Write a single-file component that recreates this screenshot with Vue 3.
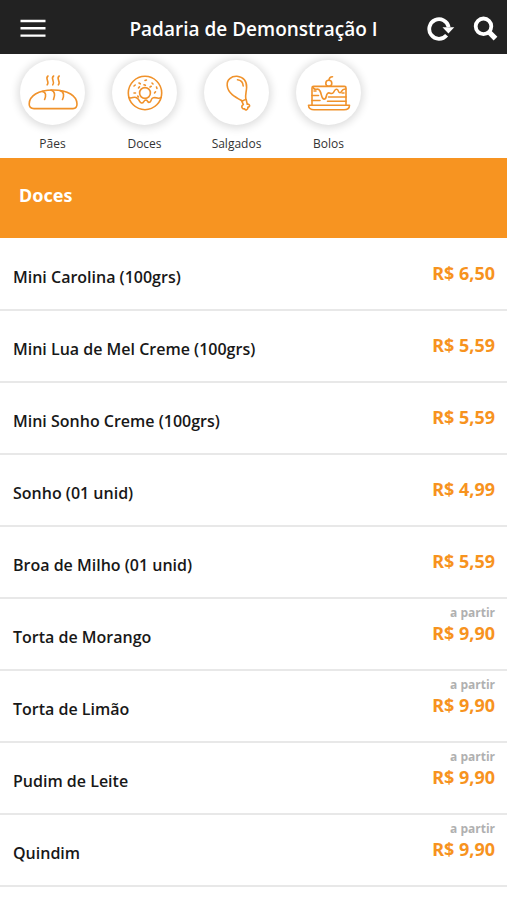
<script setup>
const categories = [
  { id: 'paes', name: 'Pães' },
  { id: 'doces', name: 'Doces' },
  { id: 'salgados', name: 'Salgados' },
  { id: 'bolos', name: 'Bolos' },
]

const products = [
  { name: 'Mini Carolina (100grs)', price: 'R$ 6,50' },
  { name: 'Mini Lua de Mel Creme (100grs)', price: 'R$ 5,59' },
  { name: 'Mini Sonho Creme (100grs)', price: 'R$ 5,59' },
  { name: 'Sonho (01 unid)', price: 'R$ 4,99' },
  { name: 'Broa de Milho (01 unid)', price: 'R$ 5,59' },
  { name: 'Torta de Morango', price: 'R$ 9,90', from: true },
  { name: 'Torta de Limão', price: 'R$ 9,90', from: true },
  { name: 'Pudim de Leite', price: 'R$ 9,90', from: true },
  { name: 'Quindim', price: 'R$ 9,90', from: true },
]
</script>

<template>
  <div class="page">
    <header class="topbar">
      <button class="icon-button" type="button" aria-label="Menu">
        <svg width="26" height="26" viewBox="0 0 26 26" stroke="#fff" stroke-width="2.4">
          <path d="M0.5 5H25.5M0.5 12.3H25.5M0.5 19.6H25.5" />
        </svg>
      </button>
      <h1 class="title">Padaria de Demonstração I</h1>
      <div class="actions">
        <button class="icon-button" type="button" aria-label="Atualizar">
          <svg width="28" height="26" viewBox="0 0 28 26" fill="none">
            <path d="M19.6 19.3A9.8 9.8 0 1 1 21.7 11.2" stroke="#fff" stroke-width="3.8" />
            <path d="M15.5 11.2H27.3L21.4 17.6Z" fill="#fff" />
          </svg>
        </button>
        <button class="icon-button" type="button" aria-label="Buscar">
          <svg width="26" height="26" viewBox="0 0 26 26" fill="none" stroke="#fff">
            <circle cx="10.5" cy="10.3" r="7.8" stroke-width="3.8" />
            <path d="M16 16L22.5 22.6" stroke-width="5.2" />
          </svg>
        </button>
      </div>
    </header>

    <nav class="categories" aria-label="Categorias">
      <a v-for="category in categories" :key="category.id" class="category" :href="'#' + category.id">
        <span class="disc">
          <svg v-if="category.id === 'paes'" class="art" viewBox="0 0 50 50">
            <path d="M1.2 36C1.2 28 10 22 25 22S49 28 49 36C49 39.4 47.5 40.6 45 40.6H6C3 40.6 1.2 39.4 1.2 36Z" />
            <path d="M14.2 23.5C18.5 24 18 28 16.6 31.5M23 22C27.5 23.5 27 27.5 25.5 31.5M32 22.6C36.5 24 36 28 34.5 31.5" />
            <path d="M20 8C16.5 10.5 22 13.5 19.2 16.8M25.6 8C22 10.5 27.5 13.5 24.8 16.8M31.2 8C27.6 10.5 33.2 13.5 30.4 16.8" />
          </svg>
          <svg v-else-if="category.id === 'doces'" class="art" viewBox="0 0 50 50">
            <circle cx="25" cy="25" r="16.7" />
            <circle cx="25" cy="25" r="5.4" />
            <path d="M8.8 29.5C12.5 31.5 13.5 27.5 17 30C20 32 19.2 34.4 21.5 35C24 35.5 23.5 31.8 26 32C28.2 32.5 27.5 35.5 30 34C32 32.5 30.5 30.5 33.3 29.8C37.5 28.9 38 31.5 41.2 29.5" />
            <path d="M14 18l1.2-1M19 15l1.3.8M25 12.4l1.4-.4M32 15l1 1M36.5 19l.4 1.4M18.5 20l1-1.2M14 25h1.5M24 16.8l1.4.5M30 19l1.2-.7M34.5 25l1-1.2M18.5 29l-.8-1" />
          </svg>
          <svg v-else-if="category.id === 'salgados'" class="art" viewBox="0 0 50 50">
            <path d="M30.5 33C24 29.5 15.8 25.5 15.2 17.5C14.6 11.5 19.5 8 25 8.3C31.5 8.8 35 13.5 34.6 19.5C34.4 24 33 27 33.8 31.5Q32 32 30.5 33Z" />
            <path d="M25.5 11.8C29 12.2 31 14.6 31.2 18" />
            <path d="M29.5 32.6L31.4 36.6C28.6 38 30 41.4 32.6 40.8C33.2 42.9 36.4 41.8 35.8 39.4C38.7 38.9 37.8 35.5 35.2 36.2L34.2 31.6" />
          </svg>
          <svg v-else class="art" viewBox="0 0 50 50">
            <path d="M8 37V20Q8 18.4 9.6 18.4H40.4Q42 18.4 42 20V37" />
            <path d="M9 19.5C11.5 24 13.5 18.5 16 23C18 26.5 17 30.5 20 31.2C23 31 21.5 27.5 23.5 25.5C25.5 23.5 27 27 29.2 24.8C31 22.7 30.5 21 32.8 21.2C35 21.5 33.5 24.5 36 24.8C38 25 37 20.7 41.5 21" />
            <path d="M8 27.5H14.5M24.5 29H42M8 32.5H16M23.5 33.3H42M10 23h2M38 25h2" />
            <path d="M4.5 37.3H45.5C45.5 40.3 43 41.7 40 41.7H10C7 41.7 4.5 40.3 4.5 37.3Z" />
            <circle cx="24.8" cy="15.2" r="3" />
            <path d="M25 12.2C25.2 10 26.5 8.8 28.5 8.8" />
          </svg>
        </span>
        <span class="category-name">{{ category.name }}</span>
      </a>
    </nav>

    <main>
      <h2 class="section-title">Doces</h2>
      <ul class="products">
        <li v-for="product in products" :key="product.name" class="product">
          <span class="product-name">{{ product.name }}</span>
          <span class="price-block">
            <small v-if="product.from" class="from">a partir</small>
            <strong class="price">{{ product.price }}</strong>
          </span>
        </li>
      </ul>
    </main>
  </div>
</template>

<style>
body {
  margin: 0;
  background: #fff;
}
</style>

<style scoped>
.page {
  font-family: "Open Sans", "Noto Sans", sans-serif;
  color: #181818;
}

.topbar {
  display: grid;
  grid-template-columns: 60px 1fr 72px;
  align-items: center;
  height: 54px;
  padding: 3px 8px 0 20px;
  box-sizing: border-box;
  background: #222;
}

.icon-button {
  display: flex;
  padding: 0;
  border: 0;
  background: none;
  cursor: pointer;
}

.title {
  margin: 0;
  color: #fff;
  font-size: 19px;
  line-height: 28px;
  font-weight: 600;
  text-align: center;
  white-space: nowrap;
}

.actions {
  display: flex;
  justify-content: flex-end;
  gap: 18px;
}

.categories {
  display: flex;
  gap: 27px;
  height: 104px;
  padding: 6px 20px 0;
  box-sizing: border-box;
}

.category {
  display: flex;
  flex-direction: column;
  align-items: center;
  gap: 9px;
  width: 65px;
  color: #333;
  text-decoration: none;
}

.disc {
  display: flex;
  align-items: center;
  justify-content: center;
  width: 65px;
  height: 65px;
  border-radius: 50%;
  background: #fff;
  box-shadow: 0 1px 8px 2px rgba(0, 0, 0, 0.14);
}

.art {
  width: 50px;
  height: 50px;
  fill: none;
  stroke: #f0922b;
  stroke-width: 1.6;
  stroke-linecap: round;
  stroke-linejoin: round;
}

.category-name {
  font-size: 12px;
  line-height: 20px;
}

.section-title {
  height: 80px;
  margin: 0;
  padding: 24px 19px 0;
  box-sizing: border-box;
  background: #f79421;
  color: #fff;
  font-family: "Noto Sans", "Open Sans", sans-serif;
  font-size: 18px;
  line-height: 26px;
  font-weight: 700;
}

.products {
  margin: 0;
  padding: 1px 0 0;
  list-style: none;
}

.product {
  display: flex;
  justify-content: space-between;
  height: 72px;
  padding: 0 12px 0 13px;
  box-sizing: border-box;
  border-bottom: 2px solid #e8e8e8;
}

.product-name {
  padding-top: 26px;
  font-size: 16px;
  line-height: 24px;
  font-weight: 600;
}

.price-block {
  display: flex;
  flex-direction: column;
  justify-content: flex-end;
  padding-bottom: 24px;
  text-align: right;
}

.from {
  color: #b0b0b0;
  font-size: 12px;
  line-height: 16px;
  font-weight: 700;
}

.price {
  color: #f7931e;
  font-family: "Noto Sans", "Open Sans", sans-serif;
  font-size: 18px;
  line-height: 24px;
  font-weight: 700;
}
</style>
